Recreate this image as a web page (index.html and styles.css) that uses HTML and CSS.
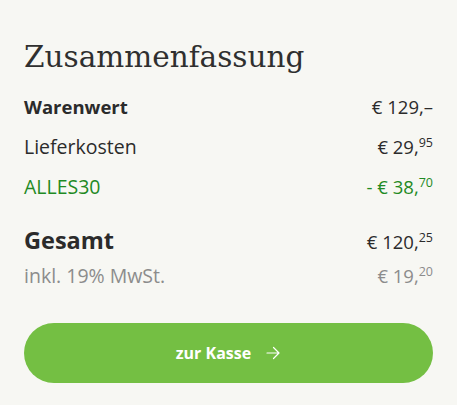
FILE: index.html
```html
<!DOCTYPE html>
<html lang="de">

<head>
    <meta charset="UTF-8">
    <meta name="viewport" content="width=device-width, initial-scale=1.0">
    <title>Zusammenfassung</title>
    <link rel="stylesheet" href="styles.css">
</head>

<body>

    <!-- Order summary -->
    <div id="summary">
        <h2 class="summary-title">Zusammenfassung</h2>

        <div class="summary-row row-strong">
            <span>Warenwert</span>
            <span class="price">€ 129,–</span>
        </div>
        <div class="summary-row">
            <span>Lieferkosten</span>
            <span class="price">€ 29,<sup>95</sup></span>
        </div>
        <div class="summary-row row-voucher">
            <span>ALLES30</span>
            <span class="price">- € 38,<sup>70</sup></span>
        </div>

        <div class="summary-row row-total">
            <span>Gesamt</span>
            <span class="price">€ 120,<sup>25</sup></span>
        </div>
        <div class="summary-row row-tax">
            <span>inkl. 19% MwSt.</span>
            <span class="price">€ 19,<sup>20</sup></span>
        </div>

        <button class="checkout-btn">
            zur Kasse
            <svg width="16" height="14" viewBox="0 0 16 14" fill="none" stroke="#fff" stroke-width="1.2" stroke-linecap="round" stroke-linejoin="round">
                <path d="M2 7h12M8.5 1.5L14 7l-5.5 5.5"/>
            </svg>
        </button>
    </div>

</body>

</html>
```

FILE: styles.css
```css
body {
    margin: 0;
    background-color: #f7f7f3;
    font-family: "Open Sans", sans-serif;
    color: #2b2b2b;
}

#summary {
    padding: 39px 24px 22px 24px;
}

.summary-title {
    font-family: "DejaVu Serif", serif;
    font-weight: normal;
    font-size: 29.5px;
    line-height: 36px;
    margin: 0 0 12px 0;
    color: #2f2f2f;
}

/* Rows */
.summary-row {
    display: flex;
    justify-content: space-between;
    align-items: baseline;
    font-size: 19.5px;
    height: 40px;
    line-height: 40px;
}

.summary-row sup {
    font-size: 12.5px;
    vertical-align: 7px;
    line-height: 0;
}

.price {
    font-size: 18.5px;
}

.row-strong span:first-child {
    font-size: 18.5px;
    font-weight: bold;
}

.row-voucher {
    color: #1f8a24;
}

.row-total {
    margin-top: 15px;
    height: 36px;
    line-height: 36px;
}

.row-total span:first-child {
    font-size: 23.5px;
    font-weight: bold;
}

.row-tax {
    color: #8c8c8c;
    height: 36px;
    line-height: 36px;
}

/* Checkout button */
.checkout-btn {
    display: flex;
    align-items: center;
    justify-content: center;
    gap: 14px;
    width: 100%;
    height: 60px;
    margin-top: 29px;
    border: none;
    border-radius: 30px;
    background-color: #74bf43;
    color: #fff;
    font-family: "Open Sans", sans-serif;
    font-size: 16px;
    font-weight: bold;
    cursor: pointer;
}
```
